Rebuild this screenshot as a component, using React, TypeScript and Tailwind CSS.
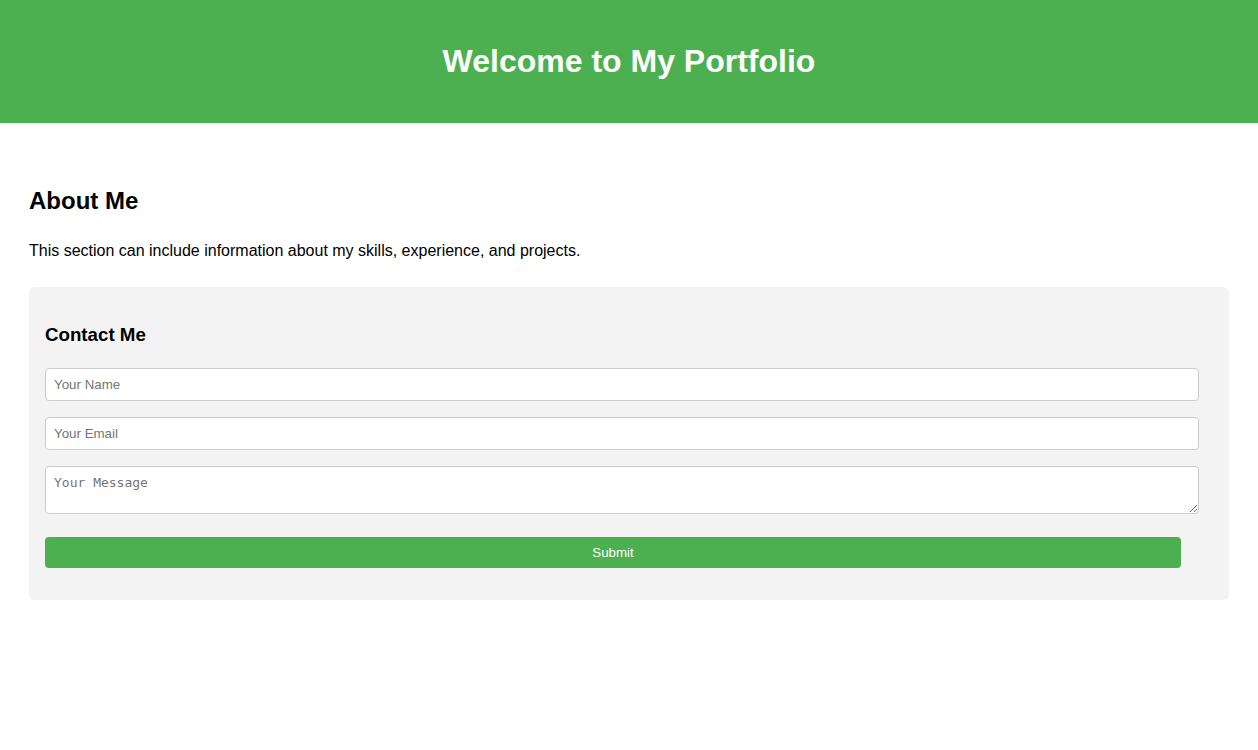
export default function App() {
  return (
    <div
      className="min-h-screen bg-white text-black"
      style={{ fontFamily: '"Liberation Sans", Arial, sans-serif' }}
    >
      {/* HEADER */}
      <header className="bg-[#4caf50] h-[123px] flex items-center justify-center">
        <h1 className="text-[32px] leading-[37px] font-bold text-white">
          Welcome to My Portfolio
        </h1>
      </header>

      {/* MAIN */}
      <main className="px-[29px] pt-[64px]">
        <h2 className="text-[24px] leading-[28px] font-bold">About Me</h2>

        <p className="mt-[27px] text-[16px] leading-[18px]">
          This section can include information about my skills, experience, and projects.
        </p>

        {/* CONTACT */}
        <section className="mt-[27px] bg-[#f3f3f3] rounded-[6px] px-4 pt-[37px] pb-[32px]">
          <h3 className="text-[18.72px] leading-[22px] font-bold">Contact Me</h3>

          <form className="mt-[22px] flex flex-col w-[1154px]">
            <input
              type="text"
              placeholder="Your Name"
              className="h-[33px] px-2 text-[13.33px] bg-white border border-[#cccccc] rounded-[4px] placeholder:text-[#757575] outline-none"
            />
            <input
              type="email"
              placeholder="Your Email"
              className="mt-4 h-[33px] px-2 text-[13.33px] bg-white border border-[#cccccc] rounded-[4px] placeholder:text-[#757575] outline-none"
            />
            <textarea
              placeholder="Your Message"
              className="mt-4 h-[48px] px-2 py-[8px] text-[13px] leading-[15px] bg-white border border-[#cccccc] rounded-[4px] placeholder:text-[#757575] outline-none resize-y"
              style={{ fontFamily: '"DejaVu Sans Mono", monospace' }}
            />
            <button
              type="button"
              className="mt-[23px] w-[1136px] h-[31px] bg-[#4caf50] text-white text-[13.33px] rounded-[4px]"
            >
              Submit
            </button>
          </form>
        </section>
      </main>
    </div>
  );
}
